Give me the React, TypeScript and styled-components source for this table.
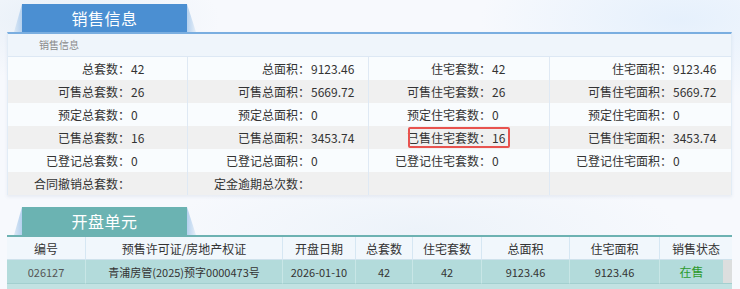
import React from 'react';
import styled, { createGlobalStyle } from 'styled-components';

const Global = createGlobalStyle`
  html, body { margin: 0; padding: 0; }
  body {
    background: #f5f8fc;
    font-family: "Noto Sans CJK SC", "Noto Sans", sans-serif;
    color: #333;
  }
`;

const Page = styled.div`
  width: 740px;
  height: 289px;
  overflow: hidden;
  box-sizing: border-box;
  padding: 4px 8px 0 7px;
  background:
    radial-gradient(ellipse 160px 60px at 60px 20px, rgba(225, 235, 245, 0.7), transparent),
    radial-gradient(ellipse 200px 80px at 680px 20px, rgba(225, 238, 252, 0.8), transparent),
    radial-gradient(ellipse 260px 60px at 420px 230px, rgba(232, 240, 248, 0.7), transparent),
    #f7f9fd;
`;

const TabBar = styled.div`
  display: flex;
  height: 28px;
  padding-left: 7px;
`;

const Wing = styled.div<{ $side: 'left' | 'right' }>`
  width: ${(p) => (p.$side === 'left' ? 8 : 9)}px;
  background: ${(p) =>
    p.$side === 'left'
      ? 'linear-gradient(to right, #dbe8f5, #b4d0ee)'
      : 'linear-gradient(to right, #b4d0ee, #e6eff8)'};
  clip-path: ${(p) =>
    p.$side === 'left'
      ? 'polygon(100% 0, 100% 100%, 0 100%)'
      : 'polygon(0 0, 100% 100%, 0 100%)'};
`;

const Tab = styled.div<{ $color: string }>`
  width: 165px;
  background: ${(p) => p.$color};
  color: #fff;
  font-size: 16px;
  display: flex;
  align-items: center;
  justify-content: center;
  letter-spacing: 0.5px;
`;

const Panel = styled.section`
  border-top: 2px solid #7aaee0;
  border-left: 1px solid #e2ecf6;
  border-right: 1px solid #e2ecf6;
  background: #f3f7fc;
  box-shadow: 0 2px 3px rgba(120, 140, 170, 0.12);
`;

const SubHeader = styled.div`
  height: 22px;
  line-height: 22px;
  font-size: 10px;
  color: #8a8a8a;
  padding-left: 31px;
  background: #eff5fb;
  border-bottom: 1px solid #dde8f4;
`;

const InfoRow = styled.div<{ $shade: boolean }>`
  display: grid;
  grid-template-columns: 180px 181px 181px 1fr;
  height: 23px;
  background: ${(p) => (p.$shade ? '#f0f0f0' : 'rgba(250, 252, 254, 0.9)')};
  font-size: 12px;
`;

const Group = styled.div<{ $last: boolean }>`
  position: relative;
  display: flex;
  align-items: center;
  border-right: ${(p) => (p.$last ? 'none' : '1px solid #dfe9f4')};
`;

const Label = styled.span`
  width: 122px;
  flex-shrink: 0;
  text-align: right;
  white-space: nowrap;
`;

const Value = styled.span`
  padding-left: 1px;
  white-space: nowrap;
`;

const Highlight = styled.div`
  position: absolute;
  left: 39px;
  top: 1px;
  width: 102px;
  height: 21px;
  box-sizing: border-box;
  border: 2px solid #e8534f;
  border-radius: 2px;
  pointer-events: none;
`;

const Gap = styled.div`
  height: 12px;
`;

const Table = styled.div`
  border-top: 2px solid #6db2b2;
  display: grid;
  grid-template-columns: 79px 197px 73px 57px 69px 88px 90px 1fr;
`;

const HeadCell = styled.div<{ $last?: boolean }>`
  height: 23px;
  display: flex;
  align-items: center;
  justify-content: center;
  font-size: 12px;
  color: #333;
  background: #f1f7fc;
  border-right: ${(p) => (p.$last ? 'none' : '1px solid #d6e7f3')};
  border-bottom: 1px solid #cfe2ec;
  box-sizing: border-box;
`;

const DataCell = styled.div<{ $last?: boolean; $tone?: 'muted' | 'status' }>`
  height: 24px;
  display: flex;
  align-items: center;
  justify-content: center;
  font-size: ${(p) => (p.$tone === 'status' ? '12px' : '11px')};
  color: ${(p) => (p.$tone === 'muted' ? '#555' : p.$tone === 'status' ? '#2d9a2d' : '#333')};
  background: #b3dbdb;
  border-right: ${(p) => (p.$last ? 'none' : '1px solid #c8e6e6')};
  border-bottom: 1px solid #a3cfcf;
  box-sizing: border-box;
  box-shadow: ${(p) => (p.$last ? 'inset -9px 0 0 #dcdede' : 'none')};
  padding-right: ${(p) => (p.$last ? '9px' : '0')};
`;

const FillerRow = styled.div`
  grid-column: 1 / -1;
  height: 24px;
  background: #c2e2e2;
`;

type Pair = [string, string];

const rows: Pair[][] = [
  [['总套数：', '42'], ['总面积：', '9123.46'], ['住宅套数：', '42'], ['住宅面积：', '9123.46']],
  [['可售总套数：', '26'], ['可售总面积：', '5669.72'], ['可售住宅套数：', '26'], ['可售住宅面积：', '5669.72']],
  [['预定总套数：', '0'], ['预定总面积：', '0'], ['预定住宅套数：', '0'], ['预定住宅面积：', '0']],
  [['已售总套数：', '16'], ['已售总面积：', '3453.74'], ['已售住宅套数：', '16'], ['已售住宅面积：', '3453.74']],
  [['已登记总套数：', '0'], ['已登记总面积：', '0'], ['已登记住宅套数：', '0'], ['已登记住宅面积：', '0']],
  [['合同撤销总套数：', ''], ['定金逾期总次数：', ''], ['', ''], ['', '']],
];

const headers = ['编号', '预售许可证/房地产权证', '开盘日期', '总套数', '住宅套数', '总面积', '住宅面积', '销售状态'];
const data = ['026127', '青浦房管(2025)预字0000473号', '2026-01-10', '42', '42', '9123.46', '9123.46', '在售'];

export default function App() {
  return (
    <>
      <Global />
      <Page>
        <TabBar>
          <Wing $side="left" />
          <Tab $color="#4b8fd2">销售信息</Tab>
          <Wing $side="right" />
        </TabBar>
        <Panel>
          <SubHeader>销售信息</SubHeader>
          {rows.map((row, ri) => (
            <InfoRow key={ri} $shade={ri % 2 === 1}>
              {row.map(([label, value], gi) => (
                <Group key={gi} $last={gi === 3}>
                  <Label>{label}</Label>
                  <Value>{value}</Value>
                  {ri === 3 && gi === 2 && <Highlight />}
                </Group>
              ))}
            </InfoRow>
          ))}
        </Panel>
        <Gap />
        <TabBar>
          <Wing $side="left" />
          <Tab $color="#6bb3b2">开盘单元</Tab>
          <Wing $side="right" />
        </TabBar>
        <Table>
          {headers.map((h, i) => (
            <HeadCell key={h} $last={i === headers.length - 1}>
              {h}
            </HeadCell>
          ))}
          {data.map((d, i) => (
            <DataCell
              key={i}
              $last={i === data.length - 1}
              $tone={i === 0 ? 'muted' : i === data.length - 1 ? 'status' : undefined}
            >
              {d}
            </DataCell>
          ))}
          <FillerRow />
        </Table>
      </Page>
    </>
  );
}
